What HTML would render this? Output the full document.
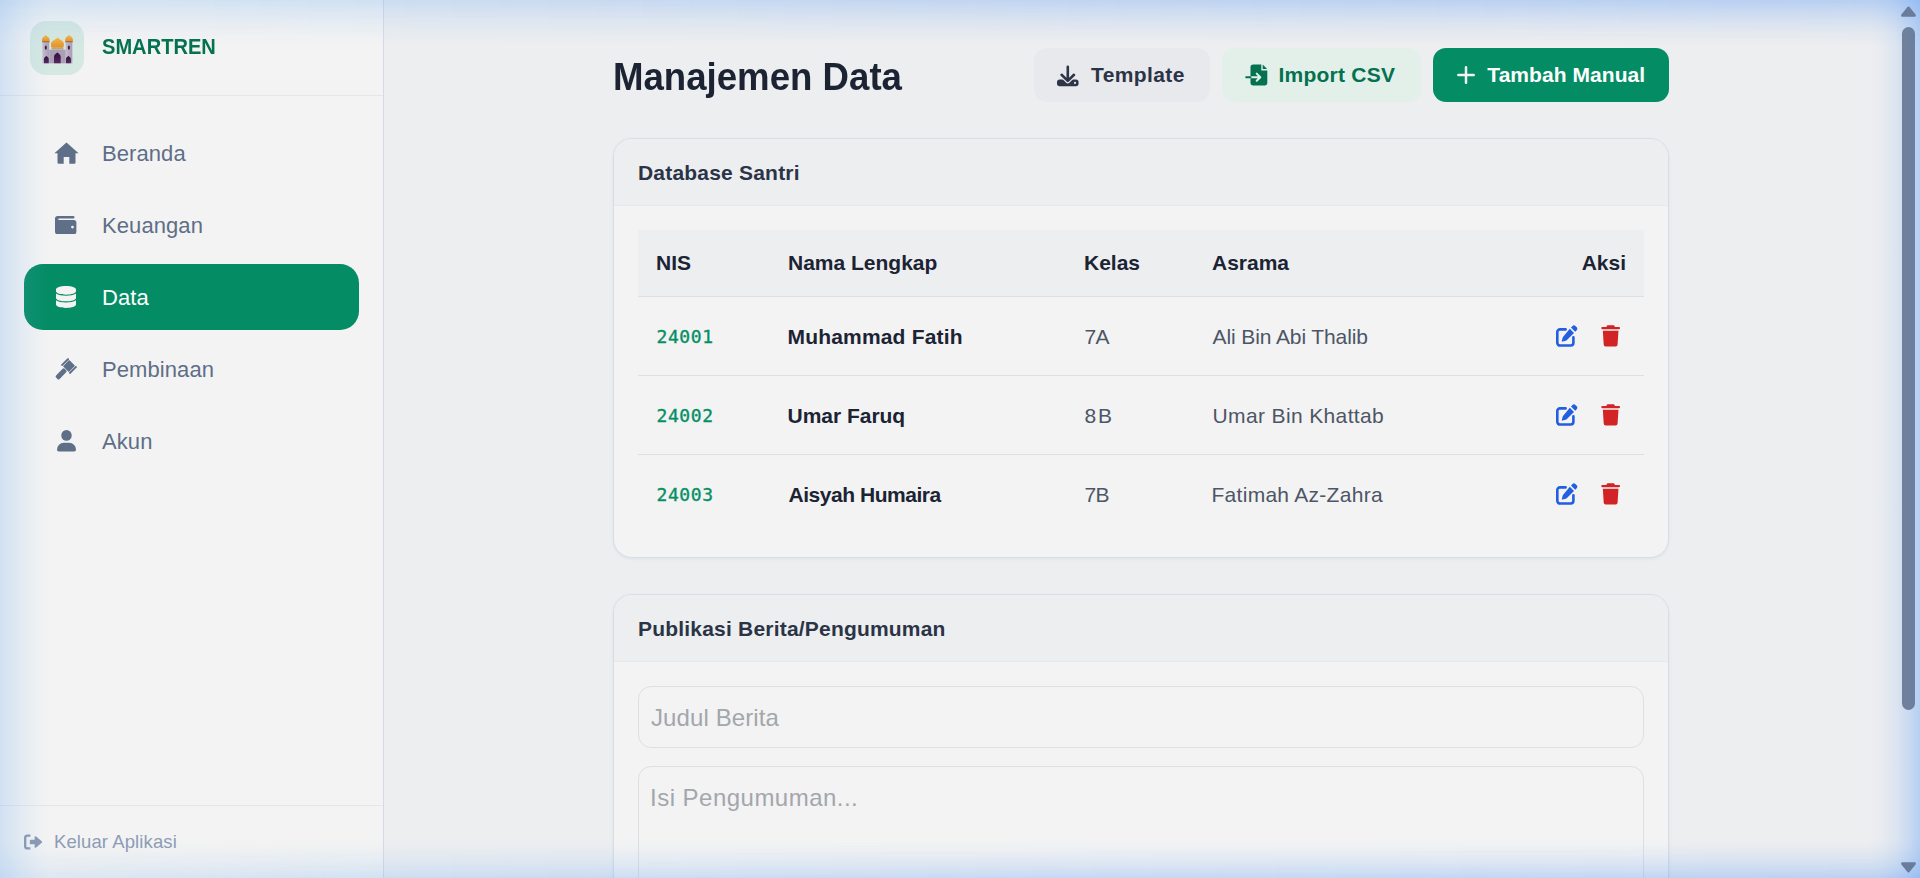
<!DOCTYPE html>
<html lang="id">
<head>
<meta charset="utf-8">
<title>SMARTREN - Manajemen Data</title>
<style>
*{box-sizing:border-box;margin:0;padding:0}
html,body{width:1920px;height:878px;overflow:hidden}
body{font-family:"Liberation Sans",sans-serif;background:#edeef0;color:#1e293b;position:relative}
.abs{position:absolute}
/* sidebar */
#side{position:absolute;left:0;top:0;width:384px;height:878px;background:#f3f3f3;border-right:1px solid #d5dbe6}
#side .head{position:absolute;left:0;top:0;width:383px;height:96px;border-bottom:1px solid #e3e6ed}
#logo{position:absolute;left:30px;top:21px;width:54px;height:54px;border-radius:16px;background:#d5e8e2}
#brand{position:absolute;left:102px;top:34.500px;font-weight:bold;font-size:21.600px;line-height:24px;color:#04714f;white-space:nowrap;transform:scaleX(.93);transform-origin:0 0}
.nav{position:absolute;left:24px;width:335px;height:66px;border-radius:19px}
.nav.on{background:#048c64}
.nav span{position:absolute;left:78px;top:21px;font-size:22px;line-height:26px;color:#5e6e87;white-space:nowrap;letter-spacing:.080px}
.nav.on span{color:#fff}
.nav svg{position:absolute;fill:#5f6f88}
.nav.on svg{fill:#f3f3f3}
#side .foot{position:absolute;left:0;top:805px;width:383px;height:73px;border-top:1px solid #e3e6ed}
#out{position:absolute;left:54px;top:831px;font-size:18.500px;line-height:22px;color:#8d9cb5;white-space:nowrap;letter-spacing:.100px}
/* main */
h1{position:absolute;left:613px;top:53.500px;font-size:38px;line-height:46px;font-weight:bold;color:#1c2333;white-space:nowrap;transform:scaleX(.9635);transform-origin:0 0}
.btn{position:absolute;top:48px;height:54px;border-radius:13px;font-weight:bold;font-size:21px;line-height:53px;white-space:nowrap}
.btn span{position:absolute;top:0}
.card{position:absolute;left:613px;width:1056px;background:#f3f3f3;border:1px solid #d7dde8;border-radius:19px;overflow:hidden;box-shadow:0 1px 3px rgba(100,116,139,.10)}
.card .ch{position:absolute;left:0;top:0;width:100%;height:67px;background:#edeef0;border-bottom:1px solid #e6e8ee}
.card .ch b{position:absolute;left:24px;top:20.500px;font-size:21px;line-height:26px;color:#2b3446;white-space:nowrap;letter-spacing:.200px}
.thead{position:absolute;left:24px;top:91px;width:1006px;height:67px;background:#edeef0;border-bottom:1px solid #dddfe4}
.thead b{position:absolute;top:20px;font-size:21px;line-height:26px;color:#1c2333;white-space:nowrap}
.row{position:absolute;left:24px;width:1006px;height:79px}
.row.bb{border-bottom:1px solid #dddfe4}
.row>*{position:absolute;white-space:nowrap}
.row svg{display:block}
.nis{left:18.500px;top:28px;font-family:"DejaVu Sans Mono","Liberation Mono",monospace;font-weight:normal;font-size:18px;line-height:24px;color:#058f64;letter-spacing:.600px;-webkit-text-stroke:.350px #058f64}
.nm{left:149.500px;top:26.500px;font-weight:bold;font-size:21px;line-height:26px;color:#1c2333;letter-spacing:.180px}
.kl{left:446.500px;top:26.500px;font-size:21px;line-height:26px;color:#4c5667;letter-spacing:-.800px}
.as{left:574.500px;top:26.500px;font-size:21px;line-height:26px;color:#4c5667;letter-spacing:-.100px}
.inp{position:absolute;left:24px;width:1006px;border:1px solid #dcdfe5;border-radius:13px;background:#f3f3f3}
.inp span{position:absolute;left:12px;font-size:24px;line-height:30px;color:#a3a6ad;white-space:nowrap}
#glow{position:absolute;left:0;top:0;width:1920px;height:878px;pointer-events:none;overflow:hidden}
#glow i{position:absolute;display:block}
#gt{left:0;top:0;width:1920px;height:46px;background:linear-gradient(to right,rgba(120,178,240,.24) 0,rgba(112,175,245,.27) 380px,rgba(100,160,245,.32) 1000px,rgba(100,160,245,.40) 1920px);-webkit-mask-image:linear-gradient(to bottom,rgba(0,0,0,1) 0,rgba(0,0,0,.72) 20%,rgba(0,0,0,.42) 45%,rgba(0,0,0,.15) 72%,rgba(0,0,0,0) 100%);mask-image:linear-gradient(to bottom,rgba(0,0,0,1) 0,rgba(0,0,0,.72) 20%,rgba(0,0,0,.42) 45%,rgba(0,0,0,.15) 72%,rgba(0,0,0,0) 100%)}
#gb{left:0;bottom:0;width:1920px;height:38px;background:linear-gradient(to right,rgba(120,178,240,.17) 0,rgba(115,178,245,.26) 380px,rgba(100,160,245,.31) 1000px,rgba(100,160,245,.37) 1920px);-webkit-mask-image:linear-gradient(to top,rgba(0,0,0,1) 0,rgba(0,0,0,.68) 22%,rgba(0,0,0,.36) 50%,rgba(0,0,0,.12) 76%,rgba(0,0,0,0) 100%);mask-image:linear-gradient(to top,rgba(0,0,0,1) 0,rgba(0,0,0,.68) 22%,rgba(0,0,0,.36) 50%,rgba(0,0,0,.12) 76%,rgba(0,0,0,0) 100%)}
#gl{left:0;top:0;width:50px;height:878px;background:linear-gradient(to right,rgba(118,176,240,.27) 0,rgba(118,176,240,.21) 18%,rgba(118,176,240,.13) 42%,rgba(118,176,240,.05) 70%,rgba(118,176,240,0) 100%)}
#gr{right:0;top:0;width:52px;height:878px;background:linear-gradient(to left,rgba(100,160,245,.40) 0,rgba(100,160,245,.27) 20%,rgba(100,160,245,.13) 45%,rgba(100,160,245,.04) 72%,rgba(100,160,245,0) 100%)}
#sb i{position:absolute;display:block}
</style>
</head>
<body>
<div id="side">
  <div class="head"></div>
  <div id="logo"></div>
<svg class="abs" style="left:41.100px;top:33.500px" width="33" height="31" viewBox="215 245 414 389">
<defs><linearGradient id="gd" x1="0" y1="0" x2="0" y2="1"><stop offset="0" stop-color="#f8b846"/><stop offset="1" stop-color="#e3912a"/></linearGradient>
<linearGradient id="wl" x1="0" y1="0" x2="1" y2="0"><stop offset="0" stop-color="#c6bccd"/><stop offset="1" stop-color="#a99cb3"/></linearGradient>
<linearGradient id="dr" x1="0" y1="0" x2="0" y2="1"><stop offset="0" stop-color="#2f1238"/><stop offset="1" stop-color="#562763"/></linearGradient></defs>
<rect x="232" y="345" width="86" height="268" fill="url(#wl)"/><rect x="524" y="345" width="84" height="268" fill="url(#wl)"/>
<rect x="318" y="442" width="206" height="171" fill="#ab9fb6"/>
<rect x="346" y="412" width="152" height="30" fill="#b9a98a"/>
<path d="M275 253 C280 268 323 282 323 318 C323 335 319 345 315 345 H235 C231 345 227 335 227 318 C227 282 270 268 275 253 Z" fill="url(#gd)"/>
<path d="M567 253 C572 268 616 282 616 318 C616 335 612 345 608 345 H526 C522 345 518 335 518 318 C518 282 562 268 567 253 Z" fill="url(#gd)"/>
<path d="M420 285 C430 308 503 322 503 372 C502 400 495 415 490 415 H350 C345 415 340 400 340 375 C340 325 410 310 420 288 Z" fill="url(#gd)"/>
<rect x="228" y="338" width="94" height="10" fill="#8a5a2a"/><rect x="519" y="338" width="96" height="10" fill="#8a5a2a"/>
<ellipse cx="275" cy="417" rx="13" ry="27" fill="#3d1a4a"/><ellipse cx="565" cy="417" rx="13" ry="27" fill="#3d1a4a"/>
<path d="M252 613 V560 C252 540 272 530 282 522 C292 530 312 540 312 560 V613 Z" fill="url(#dr)"/>
<path d="M528 613 V560 C528 540 548 530 559 522 C570 530 590 540 590 560 V613 Z" fill="url(#dr)"/>
<path d="M378 613 V530 C378 505 405 492 420 478 C435 492 462 505 462 530 V613 Z" fill="url(#dr)"/>
</svg>
  <div id="brand">SMARTREN</div>

  <div class="nav" style="top:120px"><svg style="left:30px;top:22px" width="25" height="22" viewBox="0 0 25 22"><path d="M12.5 0.6 L24.6 11.2 h-3.1 v9.3 q0 1.2-1.2 1.2 h-5 v-6.7 h-5.6 v6.7 h-5 q-1.2 0-1.2-1.2 v-9.3 h-3.1 z"/></svg><span>Beranda</span></div>
  <div class="nav" style="top:192px"><svg style="left:31.300px;top:23.700px" width="21.600" height="18.500" viewBox="0 0 22 20" preserveAspectRatio="none"><path d="M3 0 h15.5 a1.4 1.4 0 0 1 0 2.8 h-14.5 a0.7 0.7 0 0 0 0 1.4 h15 a2.8 2.8 0 0 1 2.8 2.8 v10 a2.8 2.8 0 0 1-2.8 2.8 h-16.2 a2.8 2.8 0 0 1-2.8-2.8 v-14.2 a2.8 2.8 0 0 1 2.8-2.8 z M17.8 10.6 a1.4 1.4 0 1 0 0 2.8 a1.4 1.4 0 0 0 0-2.8 z" fill-rule="evenodd"/></svg><span>Keuangan</span></div>
  <div class="nav on" style="top:264px"><svg style="left:32.400px;top:22px" width="20" height="22" viewBox="0 0 20 22"><path d="M10 0 C4.5 0 0 1.5 0 3.4 v1.9 C0 7.2 4.5 8.7 10 8.7 s10-1.5 10-3.4 V3.4 C20 1.500 15.5 0 10 0 z M0 7.600 v4.3 c0 1.9 4.5 3.400 10 3.400 s10-1.500 10-3.400 V7.600 c-2.100 1.500-6.100 2.200-10 2.200 S2.100 9.100 0 7.600 z M0 14.3 v4.300 C0 20.500 4.500 22 10 22 s10-1.500 10-3.400 v-4.300 c-2.100 1.500-6.100 2.200-10 2.200 s-7.900-.7-10-2.200 z"/></svg><span>Data</span></div>
  <div class="nav" style="top:336px"><svg style="left:30px;top:21px" width="25" height="25" viewBox="0 0 25 25"><g transform="translate(15 9) rotate(45)"><rect x="-4.100" y="-4.400" width="8.200" height="8.800"/><rect x="-6.500" y="-5.100" width="1.900" height="10.200" rx=".700"/><rect x="4.600" y="-5.100" width="1.900" height="10.200" rx=".700"/><rect x="-2.500" y="5" width="5" height="12.300" rx="1.500"/></g></svg><span>Pembinaan</span></div>
  <div class="nav" style="top:408px"><svg style="left:32.600px;top:22.300px" width="19" height="21.500" viewBox="0 0 20 22" preserveAspectRatio="none"><circle cx="10" cy="5.500" r="5.500"/><path d="M7.200 13 h5.600 A7.200 7.200 0 0 1 20 20.200 a1.800 1.800 0 0 1-1.800 1.800 H1.800 A1.800 1.800 0 0 1 0 20.200 A7.200 7.200 0 0 1 7.200 13 z"/></svg><span>Akun</span></div>

  <div class="foot"></div>
  <svg class="abs" style="left:23.800px;top:834px" width="18.700" height="16" viewBox="0 0 19 17" preserveAspectRatio="none" fill="#8a98b2"><path d="M6.500 0.500 v2.400 H3.600 a1.200 1.200 0 0 0-1.200 1.200 v8.800 a1.200 1.200 0 0 0 1.200 1.200 h2.900 v2.400 H3.600 A3.600 3.600 0 0 1 0 12.900 V4.100 A3.600 3.600 0 0 1 3.600 0.500 z M12.300 2.600 l6 5.300 a0.800 0.800 0 0 1 0 1.200 l-6 5.300 a0.900 0.900 0 0 1-1.500-.7 v-2.700 H6.900 a1 1 0 0 1-1-1 v-3 a1 1 0 0 1 1-1 h3.900 V3.300 a0.900 0.900 0 0 1 1.500-.7 z"/></svg>
  <div id="out">Keluar Aplikasi</div>
</div>

<h1>Manajemen Data</h1>

<div class="btn" style="left:1034px;width:176px;background:#e8e9ec;color:#2b3446"><svg class="abs" style="left:23.300px;top:16.600px" width="22" height="22" viewBox="0 0 22 22"><rect x="0" y="14.400" width="21.600" height="6.800" rx="2.700" fill="#2d3648"/><path d="M4.300 9.600 L10.800 16 L17.300 9.600" fill="none" stroke="#e8e9ec" stroke-width="4.600" stroke-linecap="round" stroke-linejoin="round"/><path d="M10.800 1.800 V15.500 M4.600 9.800 L10.800 15.900 L17 9.800" fill="none" stroke="#2d3648" stroke-width="2.600" stroke-linecap="round" stroke-linejoin="round"/><circle cx="18" cy="17.900" r="1.050" fill="#e8e9ec"/></svg><span style="left:57px;letter-spacing:.400px">Template</span></div>
<div class="btn" style="left:1222px;width:199px;background:#e2f0e9;color:#04714f"><svg class="abs" style="left:23px;top:16px" width="23" height="22" viewBox="0 0 23 22"><path d="M8.200 0.400 H16.300 V6.400 H22.300 V18.800 A2.700 2.700 0 0 1 19.600 21.500 H8.200 A2.700 2.700 0 0 1 5.500 18.800 V3.100 A2.700 2.700 0 0 1 8.200 0.400 Z M17.700 0.600 L22.100 5 H17.700 Z" fill="#04714f"/><path d="M5.500 13.200 H15 M11.700 9.600 L15.300 13.200 L11.700 16.800" fill="none" stroke="#e2f0e9" stroke-width="2" stroke-linecap="round" stroke-linejoin="round"/><path d="M1.200 13.200 H5.500" stroke="#04714f" stroke-width="2" stroke-linecap="round"/></svg><span style="left:56.400px;letter-spacing:.250px">Import CSV</span></div>
<div class="btn" style="left:1433px;width:236px;background:#048c64;color:#fff"><svg class="abs" style="left:24px;top:18px" width="18" height="18" viewBox="0 0 18 18"><path d="M9 1.300 V16.700 M1.300 9 H16.700" stroke="#f3f3f3" stroke-width="2.500" stroke-linecap="round"/></svg><span style="left:54.300px;letter-spacing:.060px">Tambah Manual</span></div>

<div class="card" style="top:138px;height:420px">
  <div class="ch"><b>Database Santri</b></div>
  <div class="thead">
    <b style="left:18px">NIS</b><b style="left:150px">Nama Lengkap</b><b style="left:446px">Kelas</b><b style="left:574px">Asrama</b><b style="right:18px">Aksi</b>
  </div>
  <div class="row bb" style="top:158px"><span class="nis">24001</span><span class="nm">Muhammad Fatih</span><span class="kl">7A</span><span class="as">Ali Bin Abi Thalib</span><svg style="left:918px;top:28px" width="22" height="22" viewBox="0 0 22 22"><path d="M9.600 4.400 H4 A2.700 2.700 0 0 0 1.300 7.100 V17.800 A2.700 2.700 0 0 0 4 20.500 H14.700 A2.700 2.700 0 0 0 17.400 17.800 V12.200" fill="none" stroke="#235ee0" stroke-width="2.600" stroke-linecap="round"/><path d="M16.300 1.200 a2.300 2.300 0 0 1 3.300 0 l0.900 0.900 a2.300 2.300 0 0 1 0 3.300 l-1.300 1.300 -4.200-4.200 z M13.800 3.700 l4.200 4.200 -7.300 7.300 a2 2 0 0 1-0.900 0.500 l-3.300 0.900 a0.600 0.600 0 0 1-0.700-0.700 l0.900-3.300 a2 2 0 0 1 0.500-0.900 z" fill="#235ee0"/></svg><svg style="left:962.700px;top:28px" width="19.300" height="22" viewBox="0 0 20 22" preserveAspectRatio="none"><path d="M6.900 0.300 H13.100 a1 1 0 0 1 0.900 0.600 l0.500 1 H18.600 a1.100 1.100 0 0 1 0 2.300 H1.400 a1.100 1.100 0 0 1 0-2.300 H5.500 l0.500-1 a1 1 0 0 1 0.900-0.600 z M1.900 5.700 H18.100 L17.200 19.500 a2.100 2.100 0 0 1-2.100 2 H4.900 a2.100 2.100 0 0 1-2.100-2 z" fill="#d22424"/></svg></div>
  <div class="row bb" style="top:237px"><span class="nis">24002</span><span class="nm" style="letter-spacing:-.020px">Umar Faruq</span><span class="kl" style="letter-spacing:1.900px">8B</span><span class="as" style="letter-spacing:.370px">Umar Bin Khattab</span><svg style="left:918px;top:28px" width="22" height="22" viewBox="0 0 22 22"><path d="M9.600 4.400 H4 A2.700 2.700 0 0 0 1.300 7.100 V17.800 A2.700 2.700 0 0 0 4 20.500 H14.700 A2.700 2.700 0 0 0 17.400 17.800 V12.200" fill="none" stroke="#235ee0" stroke-width="2.600" stroke-linecap="round"/><path d="M16.300 1.200 a2.300 2.300 0 0 1 3.300 0 l0.900 0.900 a2.300 2.300 0 0 1 0 3.300 l-1.300 1.300 -4.200-4.200 z M13.800 3.700 l4.200 4.200 -7.300 7.300 a2 2 0 0 1-0.900 0.500 l-3.300 0.900 a0.600 0.600 0 0 1-0.700-0.700 l0.900-3.300 a2 2 0 0 1 0.500-0.900 z" fill="#235ee0"/></svg><svg style="left:962.700px;top:28px" width="19.300" height="22" viewBox="0 0 20 22" preserveAspectRatio="none"><path d="M6.900 0.300 H13.100 a1 1 0 0 1 0.900 0.600 l0.500 1 H18.600 a1.100 1.100 0 0 1 0 2.300 H1.400 a1.100 1.100 0 0 1 0-2.300 H5.500 l0.500-1 a1 1 0 0 1 0.900-0.600 z M1.900 5.700 H18.100 L17.200 19.500 a2.100 2.100 0 0 1-2.100 2 H4.900 a2.100 2.100 0 0 1-2.100-2 z" fill="#d22424"/></svg></div>
  <div class="row" style="top:316px"><span class="nis">24003</span><span class="nm" style="letter-spacing:-.460px;left:150.500px">Aisyah Humaira</span><span class="kl">7B</span><span class="as" style="letter-spacing:.280px;left:573.500px">Fatimah Az-Zahra</span><svg style="left:918px;top:28px" width="22" height="22" viewBox="0 0 22 22"><path d="M9.600 4.400 H4 A2.700 2.700 0 0 0 1.300 7.100 V17.800 A2.700 2.700 0 0 0 4 20.500 H14.700 A2.700 2.700 0 0 0 17.400 17.800 V12.200" fill="none" stroke="#235ee0" stroke-width="2.600" stroke-linecap="round"/><path d="M16.300 1.200 a2.300 2.300 0 0 1 3.300 0 l0.900 0.900 a2.300 2.300 0 0 1 0 3.300 l-1.300 1.300 -4.200-4.200 z M13.800 3.700 l4.200 4.200 -7.300 7.300 a2 2 0 0 1-0.900 0.500 l-3.300 0.900 a0.600 0.600 0 0 1-0.700-0.700 l0.900-3.300 a2 2 0 0 1 0.500-0.900 z" fill="#235ee0"/></svg><svg style="left:962.700px;top:28px" width="19.300" height="22" viewBox="0 0 20 22" preserveAspectRatio="none"><path d="M6.900 0.300 H13.100 a1 1 0 0 1 0.900 0.600 l0.500 1 H18.600 a1.100 1.100 0 0 1 0 2.300 H1.400 a1.100 1.100 0 0 1 0-2.300 H5.500 l0.500-1 a1 1 0 0 1 0.900-0.600 z M1.900 5.700 H18.100 L17.200 19.500 a2.100 2.100 0 0 1-2.100 2 H4.900 a2.100 2.100 0 0 1-2.100-2 z" fill="#d22424"/></svg></div>
</div>

<div class="card" style="top:594px;height:400px">
  <div class="ch"><b>Publikasi Berita/Pengumuman</b></div>
  <div class="inp" style="top:91px;height:62px"><span style="top:16px;letter-spacing:.100px">Judul Berita</span></div>
  <div class="inp" style="top:171px;height:160px"><span style="top:16px;left:11px;letter-spacing:.480px">Isi Pengumuman...</span></div>
</div>

<div id="glow"><i id="gt"></i><i id="gb"></i><i id="gl"></i><i id="gr"></i></div>
<div id="sb">
  <i style="left:1902px;top:27px;width:13px;height:683px;border-radius:7px;background:linear-gradient(to right,#72819a,#6b7fa2)"></i>
  <svg class="abs" style="left:1900px;top:5px" width="17" height="13" viewBox="0 0 17 13"><path d="M8.500 2.800 L14.600 10.400 H2.400 Z" fill="#6a7c9c" stroke="#6a7c9c" stroke-width="2.600" stroke-linejoin="round"/></svg>
  <svg class="abs" style="left:1900px;top:860.500px" width="17" height="13" viewBox="0 0 17 13"><path d="M8.500 10.200 L14.600 2.600 H2.400 Z" fill="#6a7c9c" stroke="#6a7c9c" stroke-width="2.600" stroke-linejoin="round"/></svg>
</div>
</body>
</html>
